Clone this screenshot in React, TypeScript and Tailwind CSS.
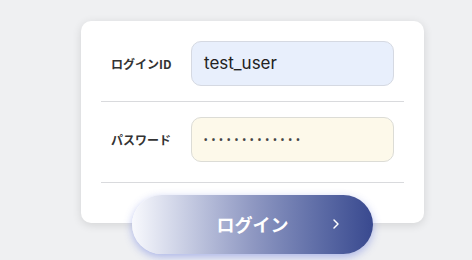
import { ChevronRight } from "lucide-react";

const jp = "font-['Noto_Sans_CJK_JP','Noto_Sans',sans-serif]";

function Row({ label, children, last }: { label: string; children: React.ReactNode; last?: boolean }) {
  return (
    <div className={`flex items-center border-b border-[#d9dadd] ${last ? "pt-[15px] pb-[20px]" : "pt-[20px] pb-[15px]"}`}>
      <div className={`w-[90px] pl-[10px] text-[12px] font-bold text-[#333] ${jp}`}>{label}</div>
      <div className="flex-1 pr-[10px]">{children}</div>
    </div>
  );
}

export default function App() {
  return (
    <div className="min-h-[260px] bg-[#eff0f2] pl-[81px] pt-[21px]">
      <div className="flex w-[343px] flex-col items-center">
        <div className="h-[202px] w-full rounded-[10px] bg-white px-5 shadow-[0_2px_10px_rgba(0,0,0,0.12)]">
          <Row label="ログインID">
            <div className="flex h-[45px] items-center rounded-[10px] border border-[#d5d9e2] bg-[#e8effc] px-3 font-['Inter',sans-serif] text-[17px] text-[#222]">
              test_user
            </div>
          </Row>
          <Row label="パスワード" last>
            <div className="flex h-[45px] items-center rounded-[10px] border border-[#dcdcd6] bg-[#fdf9ea] pl-[12px] text-[9px] font-bold tracking-[4.3px] text-[#444]">
              •••••••••••••
            </div>
          </Row>
        </div>
        <button
          type="button"
          className={`relative z-10 -mt-[28px] flex h-[59px] w-[241px] items-center justify-center rounded-full bg-gradient-to-r from-[#f8f9fd] via-[#8f98c2] to-[#39498f] shadow-[0_3px_8px_rgba(90,110,220,0.45)] ${jp}`}
        >
          <span className="text-[18px] font-bold text-white">ログイン</span>
          <ChevronRight className="absolute left-[196px] top-[21px] h-[16px] w-[16px] text-white" strokeWidth={2.2} />
        </button>
      </div>
    </div>
  );
}
